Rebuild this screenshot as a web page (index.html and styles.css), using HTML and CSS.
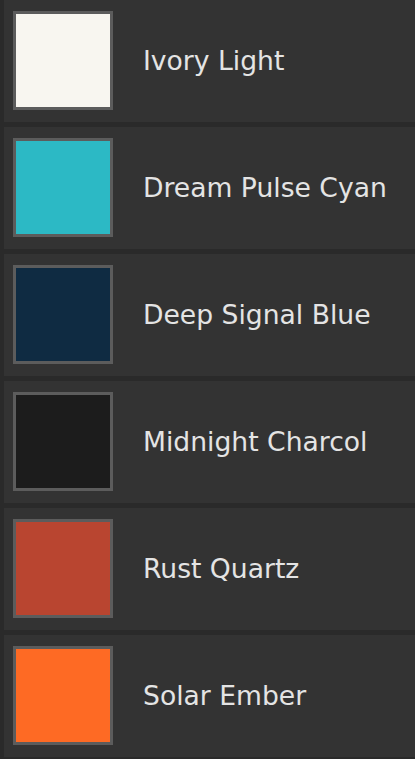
FILE: index.html
```html
<!DOCTYPE html>
<html>
<head>
<meta charset="utf-8">
<link rel="stylesheet" href="styles.css">
</head>
<body>
<ul class="palette">
  <li class="row"><span class="swatch ivory"></span><span class="name">Ivory Light</span></li>
  <li class="row"><span class="swatch cyan"></span><span class="name">Dream Pulse Cyan</span></li>
  <li class="row"><span class="swatch blue"></span><span class="name">Deep Signal Blue</span></li>
  <li class="row"><span class="swatch charcoal"></span><span class="name">Midnight Charcol</span></li>
  <li class="row"><span class="swatch rust"></span><span class="name">Rust Quartz</span></li>
  <li class="row"><span class="swatch ember"></span><span class="name">Solar Ember</span></li>
</ul>
</body>
</html>
```

FILE: styles.css
```css
html, body {
  margin: 0;
  padding: 0;
  background: #2a2a2a;
  height: 100%;
  overflow: hidden;
}
.palette {
  list-style: none;
  margin: 0;
  padding: 0 0 0 4px;
  display: flex;
  flex-direction: column;
  gap: 5px;
}
.row {
  height: 122px;
  box-sizing: border-box;
  padding: 11px 0 12px 9px;
  background: #333333;
  display: flex;
  align-items: flex-start;
}
.swatch {
  width: 100px;
  height: 99px;
  box-sizing: border-box;
  border: 3px solid #5c5c5c;
  flex: none;
}
.name {
  margin-left: 30px;
  align-self: center;
  margin-top: 0;
  font-family: "DejaVu Sans", Verdana, sans-serif;
  font-size: 26.6px;
  color: #e4e4e4;
  white-space: nowrap;
}
.ivory { background: #f8f6f0; }
.cyan { background: #2cb9c5; }
.blue { background: #0f2b42; }
.charcoal { background: #1c1c1c; }
.rust { background: #b94530; }
.ember { background: #fe6a24; }
```
